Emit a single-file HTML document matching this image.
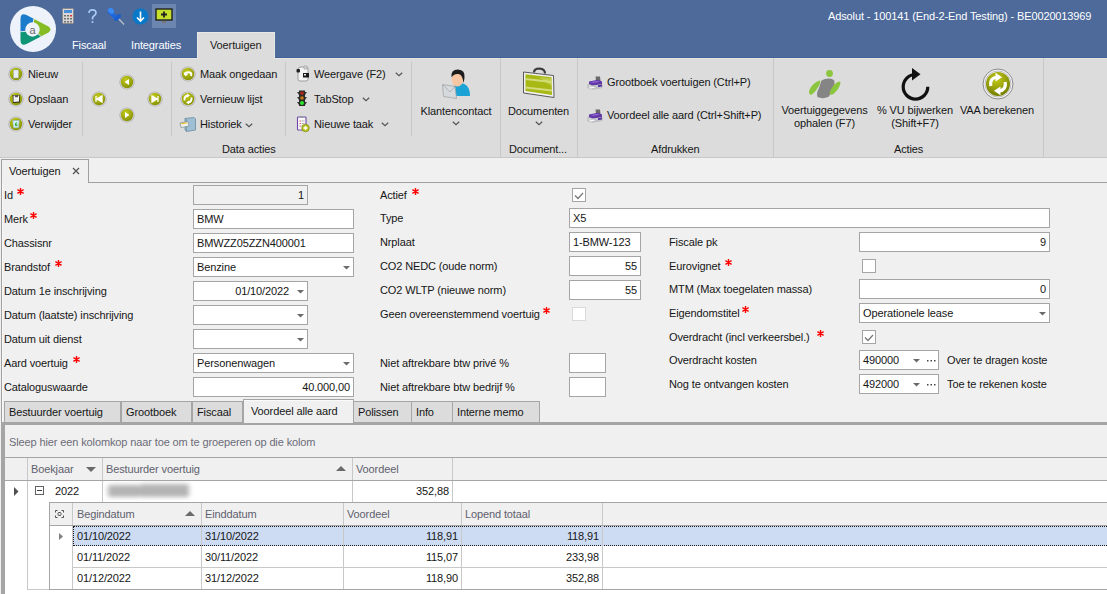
<!DOCTYPE html><html><head><meta charset="utf-8"><style>
*{margin:0;padding:0}
html,body{width:1107px;height:594px;overflow:hidden;background:#f0f0f0}
body{position:relative;font-family:"Liberation Sans",sans-serif;font-size:11px;color:#161616}
.a{position:absolute}
.t{position:absolute;white-space:nowrap;line-height:13px;font-size:11px;letter-spacing:-0.12px}
.req{color:#e00000;font-size:16px;font-weight:bold;position:absolute;line-height:16px}
</style></head><body>
<div class="a" style="left:0px;top:0px;width:1107px;height:58px;background:#4d6a9b;"></div>
<svg class="a" style="left:8px;top:4px;" width="50" height="50" viewBox="0 0 50 50"><defs><clipPath id="tri"><path d="M12.5 15 Q12.5 8.5 18.5 11 L40.5 22.5 Q44.5 25.5 40.5 28.5 L18.5 40 Q12.5 42.5 12.5 36 Z"/></clipPath></defs>
<circle cx="25" cy="25" r="23" fill="#eef2fa"/>
<g clip-path="url(#tri)">
<path d="M24.5 25.5 Q25 14 30 0 L0 0 L0 27 Q17 29 24.5 25.5 Z" fill="#1b7ccc"/>
<path d="M24.5 25.5 Q25 14 30 0 L50 0 L50 50 Q32 30 24.5 25.5 Z" fill="#86bd25"/>
<path d="M24.5 25.5 Q32 30 50 50 L0 50 L0 27 Q17 29 24.5 25.5 Z" fill="#0e9477"/>
<path d="M24.5 25.5 Q25 14 30 0 M24.5 25.5 Q32 30 50 50 M24.5 25.5 Q17 29 0 27" stroke="#eef2fa" stroke-width="0.9" fill="none"/>
</g>
<circle cx="24.5" cy="25.5" r="7.2" fill="#eef2fa"/>
<text x="24.5" y="29.5" font-family="Liberation Sans" font-size="11" fill="#6a6a6a" text-anchor="middle">a</text></svg>
<svg class="a" style="left:62px;top:8px;" width="12" height="16" viewBox="0 0 12 16"><rect x="0.5" y="0.5" width="11" height="15" rx="1" fill="#d8d8d8" stroke="#8a8a8a"/>
<rect x="2" y="2" width="8" height="3" fill="#4a90d9"/>
<g fill="#707070"><rect x="2" y="7" width="2" height="1.5"/><rect x="5" y="7" width="2" height="1.5"/><rect x="8" y="7" width="2" height="1.5" fill="#e03030"/>
<rect x="2" y="10" width="2" height="1.5"/><rect x="5" y="10" width="2" height="1.5"/><rect x="8" y="10" width="2" height="1.5"/>
<rect x="2" y="13" width="2" height="1.5"/><rect x="5" y="13" width="2" height="1.5"/><rect x="8" y="13" width="2" height="1.5"/></g></svg>
<svg class="a" style="left:85px;top:7px;" width="14" height="17" viewBox="0 0 14 17"><path d="M4 6 Q4 2.8 7.5 2.8 Q11 2.8 11 5.8 Q11 7.8 8.8 9 Q7.5 9.8 7.5 11.5 V12.5" stroke="#a9c8f2" stroke-width="1.7" fill="none"/><circle cx="7.5" cy="15" r="1.1" fill="#a9c8f2"/></svg>
<svg class="a" style="left:107px;top:7px;" width="18" height="18" viewBox="0 0 18 18"><line x1="11" y1="11" x2="17" y2="17.5" stroke="#b8c0c8" stroke-width="1.3"/>
<path d="M3 5 L8.5 10.5" stroke="#1e68dc" stroke-width="4.2" stroke-linecap="round"/>
<ellipse cx="4" cy="3.8" rx="3.3" ry="2.6" transform="rotate(40 4 3.8)" fill="#3a8af5"/>
<ellipse cx="10.5" cy="10.5" rx="4.2" ry="2.2" transform="rotate(-45 10.5 10.5)" fill="#1a5fd0"/></svg>
<svg class="a" style="left:132px;top:8px;" width="17" height="17" viewBox="0 0 17 17"><circle cx="8.5" cy="8.5" r="8" fill="#0a78c8"/>
<path d="M8.5 3.5 V13 M5 9.5 L8.5 13 L12 9.5" stroke="#fff" stroke-width="1.6" fill="none"/></svg>
<div class="a" style="left:152px;top:4px;width:24px;height:24px;background:#6d86b0;"></div>
<svg class="a" style="left:155px;top:8px;" width="18" height="16" viewBox="0 0 18 16"><rect x="1" y="1" width="16" height="11" fill="#c6e02c" stroke="#222" stroke-width="1.4"/>
<path d="M9 3.5 V9.5 M6 6.5 H12" stroke="#222" stroke-width="1.8"/>
<rect x="7" y="13" width="4" height="2" fill="#777"/></svg>
<div class="t " style="left:72px;top:39px;color:#ffffff;">Fiscaal</div>
<div class="t " style="left:131px;top:39px;color:#ffffff;">Integraties</div>
<div class="a" style="left:0px;top:57px;width:1107px;height:1px;background:#43649a;"></div>
<div class="a" style="left:0px;top:58px;width:1107px;height:1px;background:#e6e5e2;"></div>
<div class="a" style="left:197px;top:32px;width:78px;height:27px;background:#dcdcdc;box-sizing:border-box;border:1px solid #e8e8e6;border-bottom:none;"></div>
<div class="t " style="left:210px;top:39px;color:#222;">Voertuigen</div>
<div class="t " style="left:828px;top:10px;color:#ffffff;">Adsolut - 100141 (End-2-End Testing) - BE0020013969</div>
<div class="a" style="left:0px;top:59px;width:1107px;height:98px;background:#dcdcdc;"></div>
<div class="a" style="left:0px;top:157px;width:1107px;height:1px;background:#c8c8c8;"></div>
<div class="a" style="left:82px;top:62px;width:1px;height:74px;background:#c8c8c8;"></div>
<div class="a" style="left:171px;top:62px;width:1px;height:74px;background:#c8c8c8;"></div>
<div class="a" style="left:285px;top:62px;width:1px;height:74px;background:#c8c8c8;"></div>
<div class="a" style="left:411px;top:62px;width:1px;height:74px;background:#c8c8c8;"></div>
<div class="a" style="left:500px;top:58px;width:1px;height:99px;background:#c8c8c8;"></div>
<div class="a" style="left:577px;top:58px;width:1px;height:99px;background:#c8c8c8;"></div>
<div class="a" style="left:773px;top:58px;width:1px;height:99px;background:#c8c8c8;"></div>
<div class="a" style="left:1043px;top:58px;width:1px;height:99px;background:#c8c8c8;"></div>
<svg class="a" style="left:8px;top:66px;" width="16" height="16" viewBox="0 0 16 16"><defs><radialGradient id="og16_74" cx="0.4" cy="0.3" r="0.8"><stop offset="0" stop-color="#c4cc1c"/><stop offset="1" stop-color="#7f8a00"/></radialGradient></defs>
<circle cx="8" cy="8" r="7.6" fill="#a8a8a8"/><circle cx="8" cy="8" r="6.9" fill="#d8d8d8"/><circle cx="8" cy="8" r="6.2" fill="url(#og16_74)"/><rect x="5.5" y="4" width="5" height="8" fill="#e8eef4" stroke="#9aa" stroke-width="0.5"/></svg>
<svg class="a" style="left:8px;top:91px;" width="16" height="16" viewBox="0 0 16 16"><defs><radialGradient id="og16_99" cx="0.4" cy="0.3" r="0.8"><stop offset="0" stop-color="#c4cc1c"/><stop offset="1" stop-color="#7f8a00"/></radialGradient></defs>
<circle cx="8" cy="8" r="7.6" fill="#a8a8a8"/><circle cx="8" cy="8" r="6.9" fill="#d8d8d8"/><circle cx="8" cy="8" r="6.2" fill="url(#og16_99)"/><path d="M4.5 4 L11.5 4 L12 11.5 L5 12 Z" fill="#2a2a2a"/><path d="M5.5 4.5 L11 4.5 L11 10.5 L5.5 11 Z" fill="#f2f2f2"/><rect x="7" y="4" width="3" height="2.2" fill="#555"/></svg>
<svg class="a" style="left:8px;top:116px;" width="16" height="16" viewBox="0 0 16 16"><defs><radialGradient id="og16_124" cx="0.4" cy="0.3" r="0.8"><stop offset="0" stop-color="#c4cc1c"/><stop offset="1" stop-color="#7f8a00"/></radialGradient></defs>
<circle cx="8" cy="8" r="7.6" fill="#a8a8a8"/><circle cx="8" cy="8" r="6.9" fill="#d8d8d8"/><circle cx="8" cy="8" r="6.2" fill="url(#og16_124)"/><path d="M4.8 4.5 L11.2 4.5 L10.5 11.8 L5.5 11.8 Z" fill="#d8ecfa" stroke="#8ab8d8" stroke-width="0.6"/><path d="M8.8 6.5 Q7 7.5 7.5 9.5 M7.8 10 L9 9 L7.2 8.8" stroke="#30b030" stroke-width="1.1" fill="none"/></svg>
<div class="t " style="left:28px;top:68px;">Nieuw</div>
<div class="t " style="left:28px;top:93px;">Opslaan</div>
<div class="t " style="left:28px;top:118px;">Verwijder</div>
<svg class="a" style="left:119px;top:74px;" width="16" height="16" viewBox="0 0 16 16"><defs><radialGradient id="og127_82" cx="0.4" cy="0.3" r="0.8"><stop offset="0" stop-color="#c4cc1c"/><stop offset="1" stop-color="#7f8a00"/></radialGradient></defs>
<circle cx="8" cy="8" r="7.6" fill="#a8a8a8"/><circle cx="8" cy="8" r="6.9" fill="#d8d8d8"/><circle cx="8" cy="8" r="6.2" fill="url(#og127_82)"/><path d="M10 5 V11 L5.5 8 Z" fill="#fff"/></svg>
<svg class="a" style="left:91px;top:91px;" width="16" height="16" viewBox="0 0 16 16"><defs><radialGradient id="og99_99" cx="0.4" cy="0.3" r="0.8"><stop offset="0" stop-color="#c4cc1c"/><stop offset="1" stop-color="#7f8a00"/></radialGradient></defs>
<circle cx="8" cy="8" r="7.6" fill="#a8a8a8"/><circle cx="8" cy="8" r="6.9" fill="#d8d8d8"/><circle cx="8" cy="8" r="6.2" fill="url(#og99_99)"/><path d="M5 5 V11 M11 5 V11 L6 8 Z" stroke="#fff" stroke-width="1.3" fill="#fff"/></svg>
<svg class="a" style="left:147px;top:91px;" width="16" height="16" viewBox="0 0 16 16"><defs><radialGradient id="og155_99" cx="0.4" cy="0.3" r="0.8"><stop offset="0" stop-color="#c4cc1c"/><stop offset="1" stop-color="#7f8a00"/></radialGradient></defs>
<circle cx="8" cy="8" r="7.6" fill="#a8a8a8"/><circle cx="8" cy="8" r="6.9" fill="#d8d8d8"/><circle cx="8" cy="8" r="6.2" fill="url(#og155_99)"/><path d="M11 5 V11 M5 5 V11 L10 8 Z" stroke="#fff" stroke-width="1.3" fill="#fff"/></svg>
<svg class="a" style="left:119px;top:107px;" width="16" height="16" viewBox="0 0 16 16"><defs><radialGradient id="og127_115" cx="0.4" cy="0.3" r="0.8"><stop offset="0" stop-color="#c4cc1c"/><stop offset="1" stop-color="#7f8a00"/></radialGradient></defs>
<circle cx="8" cy="8" r="7.6" fill="#a8a8a8"/><circle cx="8" cy="8" r="6.9" fill="#d8d8d8"/><circle cx="8" cy="8" r="6.2" fill="url(#og127_115)"/><path d="M6 5 V11 L10.5 8 Z" fill="#fff"/></svg>
<svg class="a" style="left:180px;top:66px;" width="16" height="16" viewBox="0 0 16 16"><defs><radialGradient id="og188_74" cx="0.4" cy="0.3" r="0.8"><stop offset="0" stop-color="#c4cc1c"/><stop offset="1" stop-color="#7f8a00"/></radialGradient></defs>
<circle cx="8" cy="8" r="7.6" fill="#a8a8a8"/><circle cx="8" cy="8" r="6.9" fill="#d8d8d8"/><circle cx="8" cy="8" r="6.2" fill="url(#og188_74)"/><path d="M4.5 9 Q6 5.5 10 6.5 Q12 7.5 11 10" stroke="#fff" stroke-width="2" fill="none"/><path d="M3.5 6 L5.5 10.5 L8 8 Z" fill="#fff"/></svg>
<svg class="a" style="left:180px;top:91px;" width="16" height="16" viewBox="0 0 16 16"><defs><radialGradient id="og188_99" cx="0.4" cy="0.3" r="0.8"><stop offset="0" stop-color="#c4cc1c"/><stop offset="1" stop-color="#7f8a00"/></radialGradient></defs>
<circle cx="8" cy="8" r="7.6" fill="#a8a8a8"/><circle cx="8" cy="8" r="6.9" fill="#d8d8d8"/><circle cx="8" cy="8" r="6.2" fill="url(#og188_99)"/><path d="M4.5 9.5 Q4 5 8 4.5 M11.5 6.5 Q12 11 8 11.5" stroke="#fff" stroke-width="1.8" fill="none"/><path d="M7 2.5 L10 4.5 L7 6.5Z M9 9.5 L6 11.5 L9 13.5Z" fill="#fff"/></svg>
<svg class="a" style="left:179px;top:117px;" width="17" height="15" viewBox="0 0 17 15"><path d="M6 1.5 L15 0.5 L16.5 2 L16.5 13 L7.5 14.5 L6 13 Z" fill="#9fc0d4" stroke="#5f8296" stroke-width="0.7"/>
<path d="M6 1.5 L7.5 3 L7.5 14.5" stroke="#5f8296" stroke-width="0.6" fill="none"/>
<path d="M1 6 L9 4.5 L10 9 L2 10.5 Z" fill="#f2f2f2" stroke="#7a8a94" stroke-width="0.7"/>
<path d="M2 6.2 L8 5.2 L8.3 6.6 L2.3 7.6Z" fill="#e8c832"/></svg>
<div class="t " style="left:200px;top:68px;">Maak ongedaan</div>
<div class="t " style="left:200px;top:93px;">Vernieuw lijst</div>
<div class="t " style="left:200px;top:118px;">Historiek</div>
<svg class="a" style="left:245px;top:123px;" width="8" height="5" viewBox="0 0 8 5"><path d="M0.8 0.8 L4 3.8 L7.2 0.8" stroke="#555" stroke-width="1.2" fill="none"/></svg>
<svg class="a" style="left:295px;top:65px;" width="15" height="17" viewBox="0 0 15 17"><path d="M3 4 Q3 2 6 2 L11 2 Q13 2 13 4 L13 14 Q13 16 11 16 L5 16 Q3 16 3 14 Z" fill="#f4f4f4" stroke="#8a8a8a" stroke-width="0.8"/>
<path d="M9 1 L12 1 L12 4 L9 4Z" fill="#d8d8d8" stroke="#999" stroke-width="0.6"/>
<rect x="1.5" y="4" width="3.5" height="3.5" rx="1" fill="#202020"/>
<rect x="8" y="8" width="6" height="4.5" fill="#1a1a1a"/><rect x="9" y="9" width="2" height="1.5" fill="#eee"/></svg>
<svg class="a" style="left:296px;top:89px;" width="12" height="18" viewBox="0 0 12 18"><path d="M3 1.5 H9 V17 H3 Z" fill="#2a2a2a"/>
<path d="M1 3 L3 3 L3 6 Z M11 3 L9 3 L9 6 Z M1 8 L3 8 L3 11 Z M11 8 L9 8 L9 11 Z M1 13 L3 13 L3 16 Z M11 13 L9 13 L9 16 Z" fill="#3a3a3a"/>
<circle cx="6" cy="4.2" r="1.8" fill="#b02818"/><circle cx="6" cy="9" r="1.8" fill="#c87810"/><circle cx="6" cy="14" r="2" fill="#2ee82e"/></svg>
<svg class="a" style="left:295px;top:115px;" width="16" height="18" viewBox="0 0 16 18"><rect x="2.5" y="2" width="8.5" height="13" rx="0.8" fill="#f8f8fc" stroke="#7048a8" stroke-width="1.1"/>
<rect x="5" y="1" width="3.5" height="2" fill="#9a9aa8"/>
<path d="M4.5 6 H6 M4.5 8.5 H6 M4.5 11 H6" stroke="#d04040" stroke-width="0.8"/><path d="M6.5 6 H9.5 M6.5 8.5 H9.5 M6.5 11 H9" stroke="#a0a0a8" stroke-width="0.8"/>
<circle cx="10.5" cy="13" r="3.8" fill="#b6c020" stroke="#7a8010" stroke-width="0.6"/><path d="M10.5 11 V15 M8.5 13 H12.5" stroke="#fff" stroke-width="1.4"/></svg>
<div class="t " style="left:314px;top:68px;">Weergave (F2)</div>
<div class="t " style="left:314px;top:93px;">TabStop</div>
<div class="t " style="left:314px;top:118px;">Nieuwe taak</div>
<svg class="a" style="left:395px;top:72px;" width="8" height="5" viewBox="0 0 8 5"><path d="M0.8 0.8 L4 3.8 L7.2 0.8" stroke="#555" stroke-width="1.2" fill="none"/></svg>
<svg class="a" style="left:362px;top:97px;" width="8" height="5" viewBox="0 0 8 5"><path d="M0.8 0.8 L4 3.8 L7.2 0.8" stroke="#555" stroke-width="1.2" fill="none"/></svg>
<svg class="a" style="left:381px;top:122px;" width="8" height="5" viewBox="0 0 8 5"><path d="M0.8 0.8 L4 3.8 L7.2 0.8" stroke="#555" stroke-width="1.2" fill="none"/></svg>
<div class="t " style="left:222px;top:143px;">Data acties</div>
<svg class="a" style="left:440px;top:68px;" width="32" height="32" viewBox="0 0 32 32"><path d="M11 28 Q11 16 20.5 15 Q30 16 30 28 Z" fill="#1ba3d6"/>
<path d="M15 15 Q17.5 20 20.5 15" stroke="#0f6f94" stroke-width="0.8" fill="none"/>
<ellipse cx="17.5" cy="11" rx="5.8" ry="7.6" fill="#f6c7a2"/>
<path d="M11.5 9.5 Q10.5 1.5 18 1.5 Q25.5 1.8 24.5 10 L23.5 15 Q22.5 6.5 18.5 6 Q13.5 5.5 11.5 9.5 Z" fill="#1c1c1c"/>
<path d="M2.5 16.5 L15 18.5 L16.5 30.5 L3.5 28.5 Z" fill="#d6dadd" stroke="#a0a6aa" stroke-width="0.8"/>
<path d="M2.5 16.5 L10 24 L15 18.5" stroke="#a0a6aa" fill="none" stroke-width="0.8"/></svg>
<div class="t " style="left:306px;width:300px;text-align:center;top:105px;">Klantencontact</div>
<svg class="a" style="left:452px;top:121px;" width="8" height="5" viewBox="0 0 8 5"><path d="M0.8 0.8 L4 3.8 L7.2 0.8" stroke="#555" stroke-width="1.2" fill="none"/></svg>
<svg class="a" style="left:521px;top:66px;" width="36" height="34" viewBox="0 0 36 34"><path d="M13 6.5 Q13 2.5 18.5 2.5 Q24 3 24 7.5" stroke="#3a3a3a" stroke-width="2.2" fill="none"/>
<path d="M2.5 6 L32.5 9.5 L33 31.5 L2.5 27 Z" fill="#f0f0f0" stroke="#4a4a4a" stroke-width="0.9"/>
<path d="M4.5 8.2 L30.5 11.2 L31 29 L4.5 25 Z" fill="#a8b814"/>
<path d="M4.5 12 L30.6 15 L30.6 17 L4.5 14 Z M4.5 20.5 L30.8 23.5 L30.8 25.5 L4.5 22.5 Z" fill="#d2dc7a"/>
<path d="M18 11 L30.5 12.5 L30.8 20 Q24 16 18 11 Z" fill="#d8e27a" opacity="0.5"/></svg>
<div class="t " style="left:388.5px;width:300px;text-align:center;top:105px;">Documenten</div>
<svg class="a" style="left:534.5px;top:121px;" width="8" height="5" viewBox="0 0 8 5"><path d="M0.8 0.8 L4 3.8 L7.2 0.8" stroke="#555" stroke-width="1.2" fill="none"/></svg>
<div class="t " style="left:509px;top:143px;">Document...</div>
<svg class="a" style="left:587px;top:76px;" width="16" height="14" viewBox="0 0 16 14"><path d="M8.5 0.5 L13 0.5 L13.5 5 L9 5Z" fill="#6a6a6a"/>
<path d="M2 5.5 L11 3.8 L15 5.5 L15 8.2 L6 9.8 L2 8.2Z" fill="#6236a8"/>
<path d="M3.5 6 L10.5 4.8 L13 5.8 L6 7Z" fill="#8a62cc"/>
<path d="M1 8.2 L6 9.8 L15 8.2 L15 11.5 L6 13.2 L1 11.5Z" fill="#dfe2e6" stroke="#8a8a8a" stroke-width="0.5"/>
<path d="M6 9.8 L15 8.2 L15 11.5 L6 13.2Z" fill="#c4c8d0"/><path d="M11 9 L15 8.2 L15 10.5 L11 11.3Z" fill="#5a3aa0"/>
<path d="M0.5 11.5 L6.5 10.2 L9.5 11.5 L3.5 13Z" fill="#fafafa" stroke="#999" stroke-width="0.4"/></svg>
<svg class="a" style="left:587px;top:109px;" width="16" height="14" viewBox="0 0 16 14"><path d="M8.5 0.5 L13 0.5 L13.5 5 L9 5Z" fill="#6a6a6a"/>
<path d="M2 5.5 L11 3.8 L15 5.5 L15 8.2 L6 9.8 L2 8.2Z" fill="#6236a8"/>
<path d="M3.5 6 L10.5 4.8 L13 5.8 L6 7Z" fill="#8a62cc"/>
<path d="M1 8.2 L6 9.8 L15 8.2 L15 11.5 L6 13.2 L1 11.5Z" fill="#dfe2e6" stroke="#8a8a8a" stroke-width="0.5"/>
<path d="M6 9.8 L15 8.2 L15 11.5 L6 13.2Z" fill="#c4c8d0"/><path d="M11 9 L15 8.2 L15 10.5 L11 11.3Z" fill="#5a3aa0"/>
<path d="M0.5 11.5 L6.5 10.2 L9.5 11.5 L3.5 13Z" fill="#fafafa" stroke="#999" stroke-width="0.4"/></svg>
<div class="t " style="left:607px;top:76px;">Grootboek voertuigen (Ctrl+P)</div>
<div class="t " style="left:607px;top:109px;">Voordeel alle aard (Ctrl+Shift+P)</div>
<div class="t " style="left:651px;top:143px;">Afdrukken</div>
<svg class="a" style="left:806px;top:68px;" width="38" height="32" viewBox="0 0 38 32"><circle cx="23.5" cy="5.5" r="3.4" fill="#8cc63f"/>
<path d="M15.5 12.5 Q22 9 28 12 Q29.5 15 27 20 L23 28.5 Q17 31.5 11.5 29 Q10 25.5 13 20 Z" fill="#858585"/>
<path d="M3.5 26 Q2 23.5 5 19 Q9 13.5 14 12.5 Q15 14 12.5 18.5 Q9.5 24 6 26.5 Q4.5 27 3.5 26Z" fill="#8cc63f"/>
<path d="M24 26.5 Q23 25 25.5 20.5 Q28.5 15 33 13.5 Q35 13.5 34.5 15.5 Q33 21 28 25.5 Q25.5 27.5 24 26.5Z" fill="#8cc63f"/></svg>
<div class="t " style="left:674.5px;width:300px;text-align:center;top:104px;">Voertuiggegevens</div>
<div class="t " style="left:674.5px;width:300px;text-align:center;top:117px;">ophalen (F7)</div>
<svg class="a" style="left:900px;top:66px;" width="32" height="36" viewBox="0 0 32 36"><path d="M15.5 8.5 A12.3 12.3 0 1 0 27.8 20.8" stroke="#111" stroke-width="3.2" fill="none"/>
<path d="M12 2 L20.5 8.2 L12 14.5 Z" fill="#111"/></svg>
<div class="t " style="left:765px;width:300px;text-align:center;top:104px;">% VU bijwerken</div>
<div class="t " style="left:765px;width:300px;text-align:center;top:117px;">(Shift+F7)</div>
<svg class="a" style="left:982px;top:68px;" width="32" height="32" viewBox="0 0 32 32"><defs><radialGradient id="vaa" cx="0.45" cy="0.3" r="0.75"><stop offset="0" stop-color="#c4cc18"/><stop offset="1" stop-color="#6e7800"/></radialGradient></defs>
<circle cx="16" cy="16" r="15" fill="#f4f4f4" stroke="#8a8a8a" stroke-width="1"/><circle cx="16" cy="16" r="13" fill="none" stroke="#b0b0b0" stroke-width="0.8"/><circle cx="16" cy="16" r="12" fill="url(#vaa)"/>
<path d="M8.8 18 Q7.5 10 15 9" stroke="#fff" stroke-width="3.2" fill="none"/><path d="M13.5 4.8 L20 9.2 L13.5 13.6Z" fill="#fff"/>
<path d="M23.2 14 Q24.5 22 17 23" stroke="#fff" stroke-width="3.2" fill="none"/><path d="M18.5 27.2 L12 22.8 L18.5 18.4Z" fill="#fff"/></svg>
<div class="t " style="left:847px;width:300px;text-align:center;top:104px;">VAA berekenen</div>
<div class="t " style="left:894px;top:143px;">Acties</div>
<div class="a" style="left:0px;top:158px;width:1107px;height:25px;background:#f0f0f0;"></div>
<div class="a" style="left:89px;top:182px;width:1018px;height:1px;background:#a0a0a0;"></div>
<div class="a" style="left:1px;top:159px;width:88px;height:24px;background:#f0f0f0;box-sizing:border-box;border:1px solid #a0a0a0;border-bottom:none;"></div>
<div class="t " style="left:9px;top:165px;">Voertuigen</div>
<svg class="a" style="left:72px;top:167px;" width="8" height="8" viewBox="0 0 8 8"><path d="M1 1 L7 7 M7 1 L1 7" stroke="#505050" stroke-width="1.2"/></svg>
<div class="a" style="left:1px;top:183px;width:1px;height:240px;background:#a0a0a0;"></div>
<div class="a" style="left:2px;top:183px;width:1px;height:240px;background:#f8f8f8;"></div>
<div class="t " style="left:4px;top:189px;">Id</div>
<svg class="a" style="left:17px;top:188px;" width="7" height="7" viewBox="0 0 7 7"><path d="M3.5 0 V7 M0.4 1.7 L6.6 5.3 M0.4 5.3 L6.6 1.7" stroke="#ff0000" stroke-width="1.4"/></svg>
<div class="t " style="left:4px;top:213px;">Merk</div>
<svg class="a" style="left:30px;top:212px;" width="7" height="7" viewBox="0 0 7 7"><path d="M3.5 0 V7 M0.4 1.7 L6.6 5.3 M0.4 5.3 L6.6 1.7" stroke="#ff0000" stroke-width="1.4"/></svg>
<div class="t " style="left:4px;top:237px;">Chassisnr</div>
<div class="t " style="left:4px;top:261px;">Brandstof</div>
<svg class="a" style="left:55px;top:260px;" width="7" height="7" viewBox="0 0 7 7"><path d="M3.5 0 V7 M0.4 1.7 L6.6 5.3 M0.4 5.3 L6.6 1.7" stroke="#ff0000" stroke-width="1.4"/></svg>
<div class="t " style="left:4px;top:285px;">Datum 1e inschrijving</div>
<div class="t " style="left:4px;top:309px;">Datum (laatste) inschrijving</div>
<div class="t " style="left:4px;top:333px;">Datum uit dienst</div>
<div class="t " style="left:4px;top:357px;">Aard voertuig</div>
<svg class="a" style="left:73px;top:356px;" width="7" height="7" viewBox="0 0 7 7"><path d="M3.5 0 V7 M0.4 1.7 L6.6 5.3 M0.4 5.3 L6.6 1.7" stroke="#ff0000" stroke-width="1.4"/></svg>
<div class="t " style="left:4px;top:381px;">Cataloguswaarde</div>
<div class="a" style="left:193px;top:185px;width:115px;height:20px;background:#f0f0f0;box-sizing:border-box;border:1px solid #a5a5a5;"></div>
<div class="t " style="right:803px;top:189px;">1</div>
<div class="a" style="left:193px;top:209px;width:161px;height:20px;background:#ffffff;box-sizing:border-box;border:1px solid #a5a5a5;"></div>
<div class="t " style="left:197px;top:213px;">BMW</div>
<div class="a" style="left:193px;top:233px;width:161px;height:20px;background:#ffffff;box-sizing:border-box;border:1px solid #a5a5a5;"></div>
<div class="t " style="left:197px;top:237px;">BMWZZ05ZZN400001</div>
<div class="a" style="left:193px;top:257px;width:161px;height:20px;background:#ffffff;box-sizing:border-box;border:1px solid #a5a5a5;"></div>
<div class="t " style="left:197px;top:261px;">Benzine</div>
<svg class="a" style="left:343px;top:266px;" width="7" height="4" viewBox="0 0 7 4"><path d="M0 0 H7 L3.5 3.5 Z" fill="#6a6a6a"/></svg>
<div class="a" style="left:193px;top:281px;width:115px;height:20px;background:#ffffff;box-sizing:border-box;border:1px solid #a5a5a5;"></div>
<div class="t " style="right:818px;top:285px;">01/10/2022</div>
<svg class="a" style="left:297px;top:290px;" width="7" height="4" viewBox="0 0 7 4"><path d="M0 0 H7 L3.5 3.5 Z" fill="#6a6a6a"/></svg>
<div class="a" style="left:193px;top:305px;width:115px;height:20px;background:#ffffff;box-sizing:border-box;border:1px solid #a5a5a5;"></div>
<svg class="a" style="left:297px;top:314px;" width="7" height="4" viewBox="0 0 7 4"><path d="M0 0 H7 L3.5 3.5 Z" fill="#6a6a6a"/></svg>
<div class="a" style="left:193px;top:329px;width:115px;height:20px;background:#ffffff;box-sizing:border-box;border:1px solid #a5a5a5;"></div>
<svg class="a" style="left:297px;top:338px;" width="7" height="4" viewBox="0 0 7 4"><path d="M0 0 H7 L3.5 3.5 Z" fill="#6a6a6a"/></svg>
<div class="a" style="left:193px;top:353px;width:161px;height:20px;background:#ffffff;box-sizing:border-box;border:1px solid #a5a5a5;"></div>
<div class="t " style="left:197px;top:357px;">Personenwagen</div>
<svg class="a" style="left:343px;top:362px;" width="7" height="4" viewBox="0 0 7 4"><path d="M0 0 H7 L3.5 3.5 Z" fill="#6a6a6a"/></svg>
<div class="a" style="left:193px;top:377px;width:161px;height:20px;background:#ffffff;box-sizing:border-box;border:1px solid #a5a5a5;"></div>
<div class="t " style="right:757px;top:381px;">40.000,00</div>
<div class="t " style="left:380px;top:189px;">Actief</div>
<svg class="a" style="left:412px;top:188px;" width="7" height="7" viewBox="0 0 7 7"><path d="M3.5 0 V7 M0.4 1.7 L6.6 5.3 M0.4 5.3 L6.6 1.7" stroke="#ff0000" stroke-width="1.4"/></svg>
<div class="a" style="left:572px;top:188px;width:14px;height:14px;background:#ffffff;box-sizing:border-box;border:1px solid #a5a5a5;"></div>
<svg class="a" style="left:572px;top:188px;" width="14" height="14" viewBox="0 0 14 14"><path d="M3 7.5 L6 10.5 L11 5" stroke="#7a7a7a" stroke-width="1.3" fill="none"/></svg>
<div class="t " style="left:380px;top:212px;">Type</div>
<div class="a" style="left:569px;top:208px;width:481px;height:20px;background:#ffffff;box-sizing:border-box;border:1px solid #a5a5a5;"></div>
<div class="t " style="left:573px;top:212px;">X5</div>
<div class="t " style="left:380px;top:236px;">Nrplaat</div>
<div class="a" style="left:569px;top:232px;width:72px;height:20px;background:#ffffff;box-sizing:border-box;border:1px solid #a5a5a5;"></div>
<div class="t " style="left:573px;top:236px;">1-BMW-123</div>
<div class="t " style="left:380px;top:260px;">CO2 NEDC (oude norm)</div>
<div class="a" style="left:569px;top:256px;width:72px;height:20px;background:#ffffff;box-sizing:border-box;border:1px solid #a5a5a5;"></div>
<div class="t " style="right:470px;top:260px;">55</div>
<div class="t " style="left:380px;top:284px;">CO2 WLTP (nieuwe norm)</div>
<div class="a" style="left:569px;top:280px;width:72px;height:20px;background:#ffffff;box-sizing:border-box;border:1px solid #a5a5a5;"></div>
<div class="t " style="right:470px;top:284px;">55</div>
<div class="t " style="left:380px;top:308px;">Geen overeenstemmend voertuig</div>
<svg class="a" style="left:543px;top:307px;" width="7" height="7" viewBox="0 0 7 7"><path d="M3.5 0 V7 M0.4 1.7 L6.6 5.3 M0.4 5.3 L6.6 1.7" stroke="#ff0000" stroke-width="1.4"/></svg>
<div class="a" style="left:572px;top:307px;width:14px;height:14px;background:#ffffff;box-sizing:border-box;border:1px solid #dadada;"></div>
<div class="t " style="left:380px;top:357px;">Niet aftrekbare btw privé %</div>
<div class="a" style="left:569px;top:353px;width:37px;height:20px;background:#ffffff;box-sizing:border-box;border:1px solid #a5a5a5;"></div>
<div class="t " style="left:380px;top:381px;">Niet aftrekbare btw bedrijf %</div>
<div class="a" style="left:569px;top:377px;width:37px;height:20px;background:#ffffff;box-sizing:border-box;border:1px solid #a5a5a5;"></div>
<div class="t " style="left:669px;top:236px;">Fiscale pk</div>
<div class="a" style="left:859px;top:232px;width:191px;height:20px;background:#ffffff;box-sizing:border-box;border:1px solid #a5a5a5;"></div>
<div class="t " style="right:61px;top:236px;">9</div>
<div class="t " style="left:669px;top:260px;">Eurovignet</div>
<svg class="a" style="left:725px;top:259px;" width="7" height="7" viewBox="0 0 7 7"><path d="M3.5 0 V7 M0.4 1.7 L6.6 5.3 M0.4 5.3 L6.6 1.7" stroke="#ff0000" stroke-width="1.4"/></svg>
<div class="a" style="left:862px;top:259px;width:14px;height:14px;background:#ffffff;box-sizing:border-box;border:1px solid #a5a5a5;"></div>
<div class="t " style="left:669px;top:283px;">MTM (Max toegelaten massa)</div>
<div class="a" style="left:859px;top:279px;width:191px;height:20px;background:#ffffff;box-sizing:border-box;border:1px solid #a5a5a5;"></div>
<div class="t " style="right:61px;top:283px;">0</div>
<div class="t " style="left:669px;top:307px;">Eigendomstitel</div>
<svg class="a" style="left:742px;top:306px;" width="7" height="7" viewBox="0 0 7 7"><path d="M3.5 0 V7 M0.4 1.7 L6.6 5.3 M0.4 5.3 L6.6 1.7" stroke="#ff0000" stroke-width="1.4"/></svg>
<div class="a" style="left:859px;top:303px;width:191px;height:20px;background:#ffffff;box-sizing:border-box;border:1px solid #a5a5a5;"></div>
<div class="t " style="left:863px;top:307px;">Operationele lease</div>
<svg class="a" style="left:1039px;top:312px;" width="7" height="4" viewBox="0 0 7 4"><path d="M0 0 H7 L3.5 3.5 Z" fill="#6a6a6a"/></svg>
<div class="t " style="left:669px;top:331px;">Overdracht (incl verkeersbel.)</div>
<svg class="a" style="left:817px;top:330px;" width="7" height="7" viewBox="0 0 7 7"><path d="M3.5 0 V7 M0.4 1.7 L6.6 5.3 M0.4 5.3 L6.6 1.7" stroke="#ff0000" stroke-width="1.4"/></svg>
<div class="a" style="left:862px;top:330px;width:14px;height:14px;background:#ffffff;box-sizing:border-box;border:1px solid #a5a5a5;"></div>
<svg class="a" style="left:862px;top:330px;" width="14" height="14" viewBox="0 0 14 14"><path d="M3 7.5 L6 10.5 L11 5" stroke="#7a7a7a" stroke-width="1.3" fill="none"/></svg>
<div class="t " style="left:669px;top:354px;">Overdracht kosten</div>
<div class="a" style="left:859px;top:350px;width:80px;height:20px;background:#ffffff;box-sizing:border-box;border:1px solid #a5a5a5;"></div>
<div class="t " style="left:863px;top:354px;">490000</div>
<svg class="a" style="left:913px;top:359px;" width="7" height="4" viewBox="0 0 7 4"><path d="M0 0 H7 L3.5 3.5 Z" fill="#6a6a6a"/></svg>
<svg class="a" style="left:926px;top:359px;" width="10" height="3" viewBox="0 0 10 3"><rect x="1" y="1" width="1.5" height="1.5" fill="#444"/><rect x="4.5" y="1" width="1.5" height="1.5" fill="#444"/><rect x="8" y="1" width="1.5" height="1.5" fill="#444"/></svg>
<div class="t " style="left:947px;top:354px;width:103px;overflow:hidden;">Over te dragen koste</div>
<div class="t " style="left:669px;top:378px;">Nog te ontvangen kosten</div>
<div class="a" style="left:859px;top:374px;width:80px;height:20px;background:#ffffff;box-sizing:border-box;border:1px solid #a5a5a5;"></div>
<div class="t " style="left:863px;top:378px;">492000</div>
<svg class="a" style="left:913px;top:383px;" width="7" height="4" viewBox="0 0 7 4"><path d="M0 0 H7 L3.5 3.5 Z" fill="#6a6a6a"/></svg>
<svg class="a" style="left:926px;top:383px;" width="10" height="3" viewBox="0 0 10 3"><rect x="1" y="1" width="1.5" height="1.5" fill="#444"/><rect x="4.5" y="1" width="1.5" height="1.5" fill="#444"/><rect x="8" y="1" width="1.5" height="1.5" fill="#444"/></svg>
<div class="t " style="left:947px;top:378px;width:103px;overflow:hidden;">Toe te rekenen koste</div>
<div class="a" style="left:4px;top:401px;width:117px;height:22px;background:#dcdcdc;box-sizing:border-box;border:1px solid #a5a5a5;border-bottom:none;"></div>
<div class="t " style="left:9px;top:406px;">Bestuurder voertuig</div>
<div class="a" style="left:121px;top:401px;width:71px;height:22px;background:#dcdcdc;box-sizing:border-box;border:1px solid #a5a5a5;border-bottom:none;"></div>
<div class="t " style="left:126px;top:406px;">Grootboek</div>
<div class="a" style="left:192px;top:401px;width:51px;height:22px;background:#dcdcdc;box-sizing:border-box;border:1px solid #a5a5a5;border-bottom:none;"></div>
<div class="t " style="left:197px;top:406px;">Fiscaal</div>
<div class="a" style="left:353px;top:401px;width:59px;height:22px;background:#dcdcdc;box-sizing:border-box;border:1px solid #a5a5a5;border-bottom:none;"></div>
<div class="t " style="left:358px;top:406px;">Polissen</div>
<div class="a" style="left:411px;top:401px;width:42px;height:22px;background:#dcdcdc;box-sizing:border-box;border:1px solid #a5a5a5;border-bottom:none;"></div>
<div class="t " style="left:416px;top:406px;">Info</div>
<div class="a" style="left:452px;top:401px;width:88px;height:22px;background:#dcdcdc;box-sizing:border-box;border:1px solid #a5a5a5;border-bottom:none;"></div>
<div class="t " style="left:457px;top:406px;">Interne memo</div>
<div class="a" style="left:1px;top:422px;width:1106px;height:3px;background:#a5a5a5;"></div>
<div class="a" style="left:1px;top:422px;width:4px;height:172px;background:#a5a5a5;"></div>
<div class="a" style="left:243px;top:399px;width:111px;height:24px;background:#f0f0f0;box-sizing:border-box;border:1px solid #a5a5a5;border-bottom:none;"></div>
<div class="a" style="left:244px;top:400px;width:109px;height:1px;background:#fafafa;"></div>
<div class="t " style="left:251px;top:405px;">Voordeel alle aard</div>
<div class="a" style="left:5px;top:425px;width:1102px;height:32px;background:#f0f0f0;"></div>
<div class="t " style="left:9px;top:436px;color:#6c6c78;">Sleep hier een kolomkop naar toe om te groeperen op die kolom</div>
<div class="a" style="left:5px;top:457px;width:1102px;height:1px;background:#a5a5a5;"></div>
<div class="a" style="left:5px;top:481px;width:1102px;height:113px;background:#ffffff;"></div>
<div class="a" style="left:5px;top:458px;width:1102px;height:22px;background:#f0f0f0;"></div>
<div class="a" style="left:5px;top:480px;width:1102px;height:1px;background:#a5a5a5;"></div>
<div class="a" style="left:27px;top:458px;width:1px;height:22px;background:#c8c8c8;"></div>
<div class="a" style="left:102px;top:458px;width:1px;height:22px;background:#c8c8c8;"></div>
<div class="a" style="left:352px;top:458px;width:1px;height:22px;background:#c8c8c8;"></div>
<div class="a" style="left:452px;top:458px;width:1px;height:22px;background:#c8c8c8;"></div>
<div class="t " style="left:31px;top:463px;color:#60606e;">Boekjaar</div>
<svg class="a" style="left:86px;top:467px;" width="10" height="5" viewBox="0 0 10 5"><path d="M0 0 H10 L5 5 Z" fill="#6a6a6a"/></svg>
<div class="t " style="left:106px;top:463px;color:#60606e;">Bestuurder voertuig</div>
<svg class="a" style="left:336px;top:466px;" width="10" height="5" viewBox="0 0 10 5"><path d="M0 5 H10 L5 0 Z" fill="#6a6a6a"/></svg>
<div class="t " style="left:356px;top:463px;color:#60606e;">Voordeel</div>
<svg class="a" style="left:14px;top:487px;" width="5" height="9" viewBox="0 0 5 9"><path d="M0 0 L4.5 4.5 L0 9 Z" fill="#505050"/></svg>
<div class="a" style="left:27px;top:481px;width:1px;height:109px;background:#c8c8c8;"></div>
<div class="a" style="left:35px;top:486px;width:9px;height:9px;background:#fff;box-sizing:border-box;border:1px solid #606060;"></div>
<div class="a" style="left:37px;top:490px;width:5px;height:1px;background:#404040;"></div>
<div class="t " style="left:55px;top:485px;">2022</div>
<div class="a" style="left:102px;top:481px;width:1px;height:22px;background:#c8c8c8;"></div>
<div class="a" style="left:352px;top:481px;width:1px;height:22px;background:#c8c8c8;"></div>
<div class="a" style="left:452px;top:481px;width:1px;height:22px;background:#c8c8c8;"></div>
<svg class="a" style="left:100px;top:481px;" width="100" height="21" viewBox="0 0 100 21"><defs><filter id="bl" x="-20%" y="-50%" width="140%" height="200%"><feGaussianBlur stdDeviation="2.4 2.2"/></filter></defs><g filter="url(#bl)" fill="#b4b4b4"><rect x="8" y="4" width="32" height="12" rx="2"/><rect x="40" y="3" width="49" height="13" rx="2"/></g></svg>
<div class="t " style="right:658px;top:485px;">352,88</div>
<div class="a" style="left:27px;top:589px;width:1080px;height:1px;background:#c8c8c8;"></div>
<div class="a" style="left:49px;top:502px;width:1058px;height:1px;background:#a5a5a5;"></div>
<div class="a" style="left:49px;top:502px;width:1px;height:88px;background:#a5a5a5;"></div>
<div class="a" style="left:50px;top:503px;width:1057px;height:22px;background:#f0f0f0;"></div>
<div class="a" style="left:50px;top:525px;width:1057px;height:1px;background:#a5a5a5;"></div>
<div class="a" style="left:72px;top:503px;width:1px;height:22px;background:#c8c8c8;"></div>
<div class="a" style="left:201px;top:503px;width:1px;height:22px;background:#c8c8c8;"></div>
<div class="a" style="left:343px;top:503px;width:1px;height:22px;background:#c8c8c8;"></div>
<div class="a" style="left:461px;top:503px;width:1px;height:22px;background:#c8c8c8;"></div>
<div class="a" style="left:602px;top:503px;width:1px;height:22px;background:#c8c8c8;"></div>
<svg class="a" style="left:55px;top:510px;" width="9" height="8" viewBox="0 0 9 8"><path d="M0.5 2.5 V0.5 H2.5 M6.5 0.5 H8.5 V2.5 M8.5 5.5 V7.5 H6.5 M2.5 7.5 H0.5 V5.5" stroke="#505050" fill="none"/><rect x="3" y="2.5" width="3" height="3" rx="1" fill="none" stroke="#505050"/></svg>
<div class="t " style="left:77px;top:508px;color:#60606e;">Begindatum</div>
<svg class="a" style="left:185px;top:511px;" width="10" height="5" viewBox="0 0 10 5"><path d="M0 5 H10 L5 0 Z" fill="#6a6a6a"/></svg>
<div class="t " style="left:205px;top:508px;color:#60606e;">Einddatum</div>
<div class="t " style="left:347px;top:508px;color:#60606e;">Voordeel</div>
<div class="t " style="left:465px;top:508px;color:#60606e;">Lopend totaal</div>
<div class="a" style="left:73px;top:526px;width:1034px;height:20px;background:#cddcf3;"></div>
<div class="a" style="left:73px;top:526px;width:1040px;height:20px;box-sizing:border-box;border:1px dotted #1a1a1a;"></div>
<div class="a" style="left:72px;top:567px;width:1035px;height:1px;background:#c8c8c8;"></div>
<div class="a" style="left:49px;top:589px;width:1058px;height:1px;background:#a5a5a5;"></div>
<div class="a" style="left:72px;top:526px;width:1px;height:63px;background:#c8c8c8;"></div>
<div class="a" style="left:201px;top:526px;width:1px;height:63px;background:#c8c8c8;"></div>
<div class="a" style="left:343px;top:526px;width:1px;height:63px;background:#c8c8c8;"></div>
<div class="a" style="left:461px;top:526px;width:1px;height:63px;background:#c8c8c8;"></div>
<div class="a" style="left:602px;top:526px;width:1px;height:63px;background:#c8c8c8;"></div>
<div class="t " style="left:77px;top:530px;">01/10/2022</div>
<div class="t " style="left:205px;top:530px;">31/10/2022</div>
<div class="t " style="right:649px;top:530px;">118,91</div>
<div class="t " style="right:508px;top:530px;">118,91</div>
<div class="t " style="left:77px;top:551px;">01/11/2022</div>
<div class="t " style="left:205px;top:551px;">30/11/2022</div>
<div class="t " style="right:649px;top:551px;">115,07</div>
<div class="t " style="right:508px;top:551px;">233,98</div>
<div class="t " style="left:77px;top:572px;">01/12/2022</div>
<div class="t " style="left:205px;top:572px;">31/12/2022</div>
<div class="t " style="right:649px;top:572px;">118,90</div>
<div class="t " style="right:508px;top:572px;">352,88</div>
<svg class="a" style="left:59px;top:533px;" width="4" height="7" viewBox="0 0 4 7"><path d="M0 0 L4 3.5 L0 7 Z" fill="#808080"/></svg>
</body></html>
